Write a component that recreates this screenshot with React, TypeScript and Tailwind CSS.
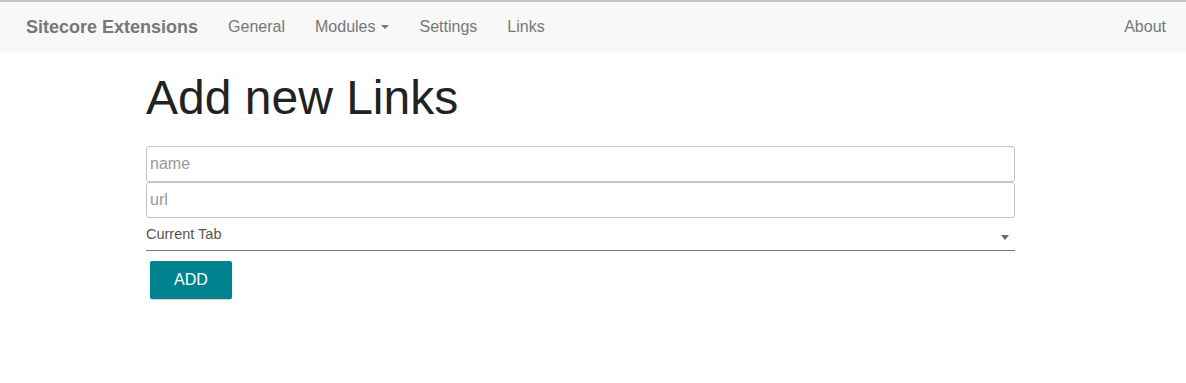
const navLinks = ["General", "Modules", "Settings", "Links"];

export default function App() {
	return (
		<div className="min-h-[383px] bg-white font-['Liberation_Sans',Arial,sans-serif]">
			<nav className="h-[52px] border-t-2 border-[#c4c4c4] bg-[#f8f8f8] flex items-center pl-[26px] pr-[20px]">
				<span className="text-[18px] font-bold text-[#777]">Sitecore Extensions</span>
				<ul className="flex items-center ml-[30px] gap-[30px]">
					{navLinks.map((link) => (
						<li key={link} className="text-[16px] text-[#777] flex items-center">
							{link}
							{link === "Modules" && (
								<span className="ml-[6px] inline-block w-0 h-0 border-l-[4px] border-r-[4px] border-t-[4px] border-l-transparent border-r-transparent border-t-[#777]" />
							)}
						</li>
					))}
				</ul>
				<span className="ml-auto text-[16px] text-[#777]">About</span>
			</nav>

			<div className="w-[869px] ml-[146px]">
				<h1 className="text-[48px] leading-none text-[#222] mt-[22px]">Add new Links</h1>
				<div className="mt-[24px] flex flex-col">
					<input
						placeholder="name"
						className="h-[36px] border border-[#c4c4c4] rounded-[3px] px-[3px] text-[16px] text-[#333] placeholder:text-[#999] outline-none"
					/>
					<input
						placeholder="url"
						className="h-[36px] border border-[#c4c4c4] rounded-[3px] px-[3px] text-[16px] text-[#333] placeholder:text-[#999] outline-none"
					/>
					<div className="h-[33px] border-b border-[#777] flex items-center justify-between pt-[2px]">
						<span className="text-[14.5px] text-[#555]">Current Tab</span>
						<span className="mr-[6px] mt-[4px] inline-block w-0 h-0 border-l-[4px] border-r-[4px] border-t-[5px] border-l-transparent border-r-transparent border-t-[#666]" />
					</div>
				</div>
				<button className="mt-[10px] ml-[4px] w-[82px] h-[38px] rounded-[2px] bg-[#00838f] text-white text-[16px] font-medium shadow-[0_1px_1px_rgba(0,0,0,0.2)]">
					ADD
				</button>
			</div>
		</div>
	);
}
